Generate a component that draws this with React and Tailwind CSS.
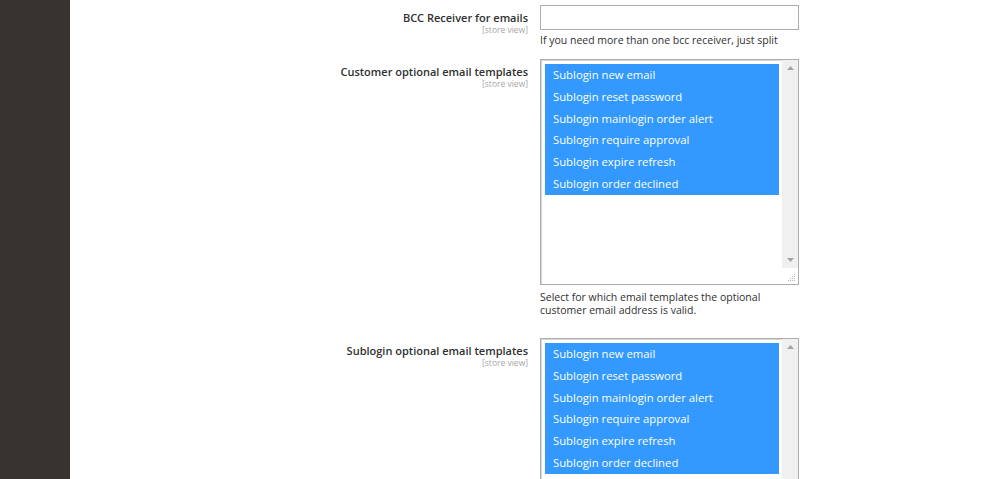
const templates = [
  "Sublogin new email",
  "Sublogin reset password",
  "Sublogin mainlogin order alert",
  "Sublogin require approval",
  "Sublogin expire refresh",
  "Sublogin order declined",
];

const Label = ({ children }) => (
  <div className="pt-[6px] pr-3 text-right">
    <div className="text-[11px] leading-[14px] font-semibold text-[#303030]">{children}</div>
    <div className="text-[8.5px] leading-[10px] text-[#a6a6a6]">[store view]</div>
  </div>
);

// multi select with every option picked, drawn like the browser's listbox
const MultiSelect = () => (
  <div className="relative flex h-[226px] w-[259px] border border-[#adadad] bg-white shadow-[inset_1px_1px_0_#d6d6d6]">
    <div className="flex-1 pt-[4px] pl-[4px] pr-[3px]">
      {templates.map((t) => (
        <div key={t} className="h-[21.8px] bg-[#3399ff] pl-2 text-[11.3px] leading-[21.8px] text-white">
          {t}
        </div>
      ))}
    </div>
    <div className="flex h-[208px] w-[16px] flex-col items-center justify-between bg-[#f0f0f0] py-[6px]">
      <svg width="7" height="4" viewBox="0 0 7 4">
        <path d="M0 4 L3.5 0 L7 4 Z" fill="#a3a3a3" />
      </svg>
      <svg width="7" height="4" viewBox="0 0 7 4">
        <path d="M0 0 L3.5 4 L7 0 Z" fill="#a3a3a3" />
      </svg>
    </div>
    <svg className="absolute right-[2px] bottom-[2px]" width="9" height="9" viewBox="0 0 9 9">
      <g fill="#b5b5b5">
        <rect x="7" y="1" width="1" height="1" />
        <rect x="5" y="3" width="1" height="1" />
        <rect x="7" y="3" width="1" height="1" />
        <rect x="3" y="5" width="1" height="1" />
        <rect x="5" y="5" width="1" height="1" />
        <rect x="7" y="5" width="1" height="1" />
        <rect x="1" y="7" width="1" height="1" />
        <rect x="3" y="7" width="1" height="1" />
        <rect x="5" y="7" width="1" height="1" />
        <rect x="7" y="7" width="1" height="1" />
      </g>
    </svg>
  </div>
);

const Note = ({ children, className = "" }) => (
  <div className={"text-[10.5px] leading-[13px] text-[#303030] " + className}>{children}</div>
);

export default function App() {
  return (
    <div className="flex min-h-[479px] bg-white" style={{ fontFamily: '"Open Sans", "Noto Sans", sans-serif' }}>
      <div className="w-[70px] shrink-0 bg-[#373330]" />
      <div className="grid flex-1 grid-cols-[470px_259px] content-start pt-[5px]">
        <Label>BCC Receiver for emails</Label>
        <div>
          <input type="text" className="block h-[25px] w-[259px] border border-[#adadad] bg-white outline-none" />
          <Note className="mt-[4px] whitespace-nowrap">If you need more than one bcc receiver, just split</Note>
        </div>

        <div className="col-span-2 h-[12px]" />

        <Label>Customer optional email templates</Label>
        <div>
          <MultiSelect />
          <Note className="mt-[6px]">
            Select for which email templates the optional
            <br />
            customer email address is valid.
          </Note>
        </div>

        <div className="col-span-2 h-[21px]" />

        <Label>Sublogin optional email templates</Label>
        <div>
          <MultiSelect />
        </div>
      </div>
    </div>
  );
}
